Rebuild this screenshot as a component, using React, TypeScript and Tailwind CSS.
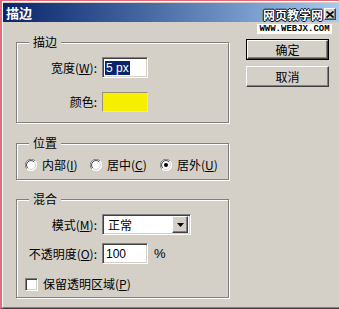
import React from "react";

const sunken =
  "border border-t-[#808080] border-l-[#808080] border-b-white border-r-white shadow-[inset_1px_1px_0_#404040,inset_-1px_-1px_0_#d4d0c8]";
const raised =
  "border border-t-white border-l-white border-b-[#404040] border-r-[#404040] shadow-[inset_-1px_-1px_0_#808080]";

function U({ c }: { c: string }) {
  return <span className="underline underline-offset-[1px]">{c}</span>;
}

function Group({
  label,
  className,
  children,
}: {
  label: string;
  className: string;
  children: React.ReactNode;
}) {
  return (
    <div
      className={`relative w-[213px] border border-[#808080] shadow-[inset_1px_1px_0_#fff,1px_1px_0_#fff] ${className}`}
    >
      <span className="absolute -top-[8px] left-[12px] bg-[#D4D0C8] px-[4px] leading-[14px]">
        {label}
      </span>
      {children}
    </div>
  );
}

function Radio({ checked }: { checked?: boolean }) {
  return (
    <svg width="12" height="12" viewBox="0 0 12 12" className="shrink-0">
      <circle cx="6" cy="6" r="5.5" fill="#fff" />
      <path d="M10.2 2.1 A5.5 5.5 0 0 0 1.8 9.9" stroke="#808080" strokeWidth="1" fill="none" />
      <path d="M9.2 2.9 A4.4 4.4 0 0 0 2.8 9.1" stroke="#404040" strokeWidth="1" fill="none" />
      <path d="M1.8 9.9 A5.5 5.5 0 0 0 10.2 2.1" stroke="#fff" strokeWidth="1" fill="none" />
      <path d="M2.8 9.1 A4.4 4.4 0 0 0 9.2 2.9" stroke="#d4d0c8" strokeWidth="1" fill="none" />
      {checked && <circle cx="6" cy="6" r="2" fill="#000" />}
    </svg>
  );
}

export default function App() {
  return (
    <div className="w-[339px] h-[309px] bg-[#D4D0C8] border-l-2 border-t border-[#e46b7b] border-b border-b-[#404040] font-['Noto_Sans_CJK_SC','Noto_Sans',sans-serif] text-[12px] leading-[14px] text-black relative overflow-hidden">
      <div className="h-full border-l border-t border-white border-b border-b-[#808080] pt-px flex flex-col">
        {/* Title bar */}
        <div className="h-[19px] bg-linear-to-r from-[#0A246A] to-[#A6CAF0] flex items-center pl-[3px]">
          <span className="text-white font-bold text-[13px] leading-[15px]">描边</span>
        </div>

        {/* Body */}
        <div className="flex pl-[13px]">
          <div className="flex flex-col w-[213px]">
            <Group label="描边" className="mt-[20px] h-[81px]">
              <div className="grid grid-cols-[80px_auto] gap-x-[5px] gap-y-[14px] pt-[14px] items-center">
                <div className="text-right">
                  宽度(<U c="W" />):
                </div>
                <div className={`w-[46px] h-[21px] bg-white ${sunken} flex items-center pl-[2px]`}>
                  <span className="bg-[#0A246A] text-white font-['Liberation_Sans',sans-serif] text-[12px] leading-[14px] px-px">
                    5 px
                  </span>
                </div>
                <div className="text-right">颜色:</div>
                <div className="w-[46px] h-[20px] bg-[#f6f000] border border-t-[#9a9470] border-l-[#9a9470] border-b-[#e8e6c0] border-r-[#e8e6c0]" />
              </div>
            </Group>

            <Group label="位置" className="mt-[20px] h-[37px]">
              <div className="flex items-center pl-[8px] pt-[14px]">
                <div className="flex items-center gap-[5px] w-[65px]">
                  <Radio />
                  <span>
                    内部(<U c="I" />)
                  </span>
                </div>
                <div className="flex items-center gap-[5px] w-[70px]">
                  <Radio />
                  <span>
                    居中(<U c="C" />)
                  </span>
                </div>
                <div className="flex items-center gap-[5px]">
                  <Radio checked />
                  <span>
                    居外(<U c="U" />)
                  </span>
                </div>
              </div>
            </Group>

            <Group label="混合" className="mt-[19px] h-[99px]">
              <div className="grid grid-cols-[80px_auto] gap-x-[5px] gap-y-[8px] pt-[14px] items-center">
                <div className="text-right">
                  模式(<U c="M" />):
                </div>
                <div className={`w-[89px] h-[21px] bg-white ${sunken} flex items-center justify-between pl-[5px] pr-[2px]`}>
                  <span>正常</span>
                  <div className={`w-[16px] h-[17px] bg-[#D4D0C8] ${raised} flex items-center justify-center`}>
                    <svg width="7" height="4" viewBox="0 0 7 4">
                      <path d="M0 0 H7 L3.5 4 Z" fill="#000" />
                    </svg>
                  </div>
                </div>
                <div className="text-right whitespace-nowrap">
                  不透明度(<U c="O" />):
                </div>
                <div className="flex items-center">
                  <div className={`w-[46px] h-[21px] bg-white ${sunken} flex items-center pl-[3px] font-['Liberation_Sans',sans-serif]`}>
                    100
                  </div>
                  <span className="ml-[6px] font-['Liberation_Sans',sans-serif] text-[13px]">%</span>
                </div>
              </div>
              <div className="flex items-center gap-[5px] pl-[8px] mt-[13px]">
                <div className={`w-[13px] h-[13px] bg-white ${sunken}`} />
                <span>
                  保留透明区域(<U c="P" />)
                </span>
              </div>
            </Group>
          </div>

          <div className="ml-[17px] mt-[17px] flex flex-col gap-[6px] w-[83px]">
            <div className="border border-black">
              <div className={`h-[19px] ${raised} flex items-center justify-center`}>确定</div>
            </div>
            <div className={`h-[21px] ${raised} flex items-center justify-center`}>取消</div>
          </div>
        </div>
      </div>

      {/* watermark overlay */}
      <div className="absolute left-[261px] top-[6px] text-[12px] leading-[15px] text-white font-bold [text-shadow:1px_0_0_#000,-1px_0_0_#000,0_1px_0_#000,0_-1px_0_#000]">
        网页教学网
      </div>
      <div className="absolute left-[255px] top-[23px] w-[75px] h-[10px] bg-white flex items-center justify-center font-['Liberation_Mono',monospace] font-bold text-[9px] leading-[9px] text-black">
        WWW.WEBJX.COM
      </div>
      <div className={`absolute left-[322px] top-[7px] w-[12px] h-[12px] bg-[#D4D0C8] ${raised} flex items-center justify-center`}>
        <svg width="8" height="7" viewBox="0 0 8 7">
          <path d="M0.5 0.5 L7.5 6.5 M7.5 0.5 L0.5 6.5" stroke="#000" strokeWidth="1.6" />
        </svg>
      </div>
    </div>
  );
}
